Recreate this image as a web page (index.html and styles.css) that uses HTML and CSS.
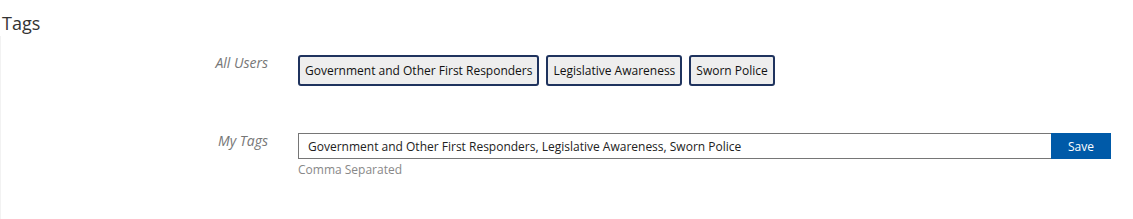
FILE: index.html
```html
<!DOCTYPE html>
<html lang="en">
<head>
    <meta charset="UTF-8">
    <title>Tags</title>
    <link rel="stylesheet" href="styles.css">
</head>
<body>

<h3 class="title">Tags</h3>

<div class="panel">

    <!-- Tags shared with all users -->
    <div class="row">
        <div class="label">All Users</div>
        <div class="field tag-list">
            <button type="button" class="tag">Government and Other First Responders</button>
            <button type="button" class="tag">Legislative Awareness</button>
            <button type="button" class="tag">Sworn Police</button>
        </div>
    </div>

    <!-- Personal tags -->
    <div class="row my-tags">
        <div class="label">My Tags</div>
        <div class="field">
            <div class="input-group">
                <input type="text" class="tag-input" value="Government and Other First Responders, Legislative Awareness, Sworn Police">
                <button type="button" class="save">Save</button>
            </div>
            <div class="hint">Comma Separated</div>
        </div>
    </div>

</div>

</body>
</html>
```

FILE: styles.css
```css
body {
    font-family: 'Open Sans', Arial, sans-serif;
    background-color: #fff;
    color: #333;
    margin: 0;
    padding: 0;
}

.title {
    font-size: 18px;
    font-weight: normal;
    color: #333;
    margin: 0;
    padding: 10px 0 0 2px;
    line-height: 26px;
}

.panel {
    border-left: 1px solid #f2f2f2;
    padding-top: 19px;
    min-height: 183px;
    box-sizing: border-box;
}

.row {
    display: grid;
    grid-template-columns: 267px 1fr;
}

.label {
    font-style: italic;
    font-size: 14px;
    color: #777;
    text-align: right;
    line-height: 20px;
    margin-top: -2px;
}

.field {
    padding-left: 30px;
    padding-right: 22px;
}

.tag-list {
    display: flex;
    gap: 7px;
}

.tag {
    font-family: 'Open Sans', Arial, sans-serif;
    font-size: 12px;
    color: #111;
    background-color: #eee;
    border: 2px solid #1f335e;
    border-radius: 3px;
    height: 31px;
    padding: 0 5px;
    cursor: pointer;
}

.my-tags {
    margin-top: 47px;
}

.input-group {
    display: flex;
    height: 26px;
}

.tag-input {
    flex: 1;
    font-family: 'Open Sans', Arial, sans-serif;
    font-size: 12px;
    color: #222;
    border: 1px solid #767676;
    border-right: none;
    padding: 0 9px;
    margin: 0;
    height: 26px;
    box-sizing: border-box;
}

.save {
    font-family: 'Open Sans', Arial, sans-serif;
    font-size: 12px;
    color: white;
    background-color: #005aa8;
    border: none;
    width: 60px;
    height: 26px;
    cursor: pointer;
}

.hint {
    font-size: 12px;
    color: #888;
    margin-top: 2px;
}
```
